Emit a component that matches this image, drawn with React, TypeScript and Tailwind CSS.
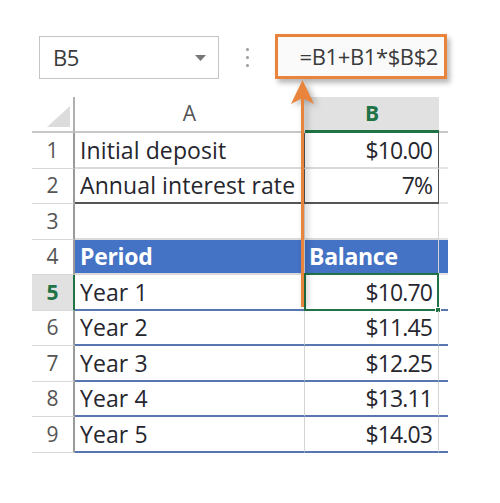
import React from "react";

const rows: { n: number; a: string; b: string }[] = [
  { n: 1, a: "Initial deposit", b: "$10.00" },
  { n: 2, a: "Annual interest rate", b: "7%" },
  { n: 3, a: "", b: "" },
  { n: 4, a: "Period", b: "Balance" },
  { n: 5, a: "Year 1", b: "$10.70" },
  { n: 6, a: "Year 2", b: "$11.45" },
  { n: 7, a: "Year 3", b: "$12.25" },
  { n: 8, a: "Year 4", b: "$13.11" },
  { n: 9, a: "Year 5", b: "$14.03" },
];

function Row({ n, a, b }: { n: number; a: string; b: string }) {
  const isHead = n === 4;
  const isSel = n === 5;
  const isData = n >= 5;
  const bottom =
    n === 2 ? "border-b-[#555]" : isData ? "border-b-[#5876b0]" : "border-b-[#dadada]";
  return (
    <div className="flex h-[35.5px]">
      <div
        className={`w-[43px] shrink-0 flex items-center justify-center border-b border-b-[#d8d8d8] border-r-2 ${
          isSel ? "bg-[#e1e1e1] border-r-[#217346] text-[#217346] font-bold" : "border-r-[#9a9a9a] text-[#555]"
        } text-[21px]`}
      >
        {n}
      </div>
      <div
        className={`w-[230px] shrink-0 flex items-center pl-[5px] border-b-2 ${bottom} border-r ${
          n <= 2 ? "border-r-[#555]" : "border-r-[#d4d4d4]"
        } ${isHead ? "bg-[#4472c4] text-white font-bold border-r-[#4472c4] border-b-[#4472c4] tracking-[-0.3px]" : "text-[#26262e] font-medium tracking-[0.1px]"} text-[23px] whitespace-nowrap`}
      >
        {a}
      </div>
      <div
        className={`relative w-[134px] shrink-0 flex items-center border-b-2 ${bottom} border-r ${
          n <= 2 ? "border-r-[#555]" : "border-r-[#d4d4d4]"
        } ${isHead ? "bg-[#4472c4] text-white font-bold justify-start pl-[4px] border-r-[#4472c4] border-b-[#4472c4] tracking-[-0.3px]" : "justify-end pr-[6px] text-[#26262e] font-medium tracking-[-0.9px]"} text-[23px] whitespace-nowrap`}
      >
        {b}
        {isSel && (
          <div className="absolute -left-[1px] -top-[2px] -right-[1px] -bottom-[2px] border-2 border-[#217346]">
            <div className="absolute -right-[4px] -bottom-[4px] w-[6px] h-[6px] bg-[#217346] border border-white" />
          </div>
        )}
      </div>
      <div
        className={`w-[9px] shrink-0 border-b-2 ${isData ? "border-b-[#5876b0]" : "border-b-[#e4e4e4]"} ${
          isHead ? "bg-[#4472c4] border-b-[#4472c4]" : ""
        }`}
      />
    </div>
  );
}

export default function App() {
  return (
    <div className="relative w-[500px] h-[503px] bg-white overflow-hidden" style={{ fontFamily: "'Open Sans', Lato, sans-serif" }}>
      <div className="flex items-start pt-[34px] pl-[39px]">
        <div className="mt-[2px] w-[180px] h-[43px] border border-[#c4c4c4] flex items-center justify-between pl-[13px] pr-[12px] text-[22px] text-[#3a3a3a]">
          <span className="tracking-[-0.5px]">B5</span>
          <svg width="11" height="6" viewBox="0 0 11 6">
            <path d="M0 0 L11 0 L5.5 6 Z" fill="#777" />
          </svg>
        </div>
        <div className="w-[56px] h-[44px] flex flex-col items-center justify-center gap-[5px] pt-[2px]">
          <div className="w-[3px] h-[3px] rounded-full bg-[#9a9a9a]" />
          <div className="w-[3px] h-[3px] rounded-full bg-[#9a9a9a]" />
          <div className="w-[3px] h-[3px] rounded-full bg-[#9a9a9a]" />
        </div>
        <div className="w-[172px] h-[45px] border-[3px] border-[#e8843c] bg-[#fafafa] flex items-center justify-end pr-[6px] text-[22px] text-[#3a3a3a] tracking-[-0.4px] whitespace-nowrap shadow-[3px_4px_5px_rgba(0,0,0,0.28)]">
          =B1+B1*$B$2
        </div>
      </div>

      <div className="mt-[18px] ml-[32px] w-[416px]">
        <div className="flex h-[36px]">
          <div className="relative w-[43px] shrink-0 border-r-2 border-r-[#b0b0b0] border-b-2 border-b-[#c8c8c8]">
            <svg className="absolute left-[15px] top-[9px]" width="23" height="21" viewBox="0 0 23 21">
              <path d="M23 0 L23 21 L0 21 Z" fill="#dcdcdc" />
            </svg>
          </div>
          <div className="w-[230px] shrink-0 flex items-center justify-center text-[21px] text-[#555] border-b-2 border-b-[#c8c8c8] border-r border-r-[#e0e0e0]">
            A
          </div>
          <div className="w-[134px] shrink-0 flex items-center justify-center text-[21px] font-bold text-[#217346] bg-[#e1e1e1] border-b-[3px] border-b-[#217346]">
            B
          </div>
          <div className="w-[9px] shrink-0 border-b-2 border-b-[#c8c8c8]" />
        </div>
        {rows.map((r) => (
          <Row key={r.n} {...r} />
        ))}
      </div>

      <svg
        className="absolute left-[290px] top-[79px]"
        width="26"
        height="232"
        viewBox="0 0 26 232"
        style={{ filter: "drop-shadow(3px 2px 3px rgba(0,0,0,0.3))" }}
      >
        <line x1="12.5" y1="18" x2="12.5" y2="228" stroke="#e8843c" strokeWidth="3" />
        <path d="M12.5 1 L24 25 L12.5 19 L1 25 Z" fill="#e8843c" />
      </svg>
    </div>
  );
}
